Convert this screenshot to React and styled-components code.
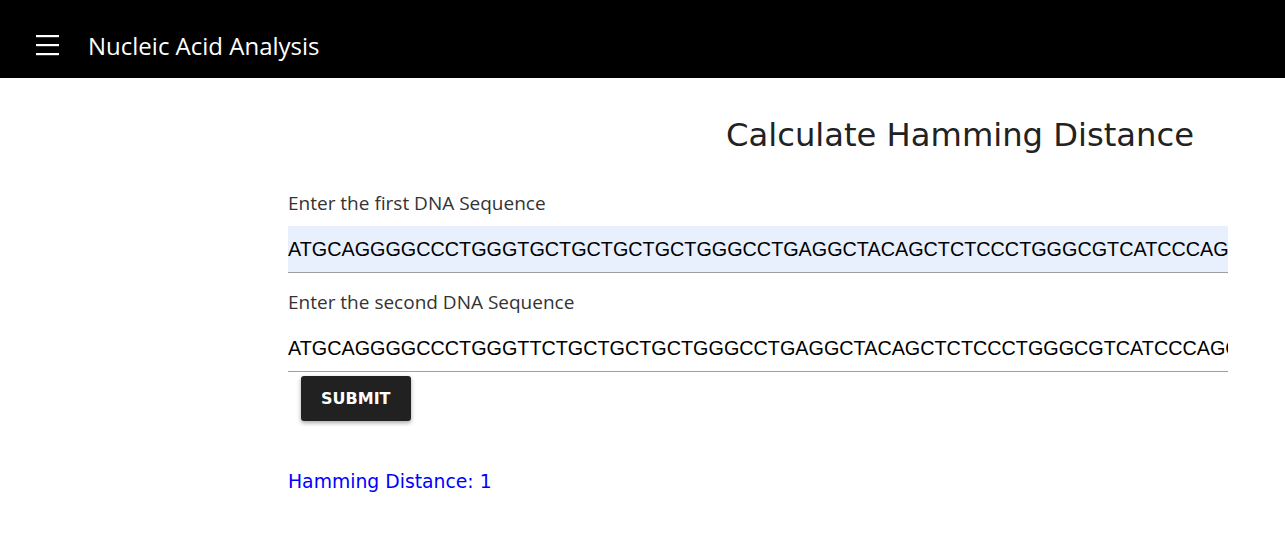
import React from "react";
import styled, { createGlobalStyle } from "styled-components";

const Global = createGlobalStyle`
  body {
    margin: 0;
    background: #fff;
    font-family: "Open Sans", "Noto Sans", sans-serif;
  }
`;

const Header = styled.header`
  height: 78px;
  background: #000;
  display: flex;
  align-items: center;
  padding-left: 36px;
  padding-top: 12px;
  box-sizing: border-box;
`;

const MenuButton = styled.button`
  background: none;
  border: none;
  padding: 0;
  margin-right: 29px;
  display: flex;
  cursor: pointer;
`;

const AppTitle = styled.h1`
  margin: 0;
  color: #fff;
  font-family: "Open Sans", sans-serif;
  font-size: 24px;
  font-weight: 400;
`;

const Main = styled.main`
  width: 940px;
  margin-left: 288px;
`;

const PageTitle = styled.h2`
  margin: 38px 34px 36px 0;
  text-align: right;
  font-family: "DejaVu Sans", Verdana, sans-serif;
  font-size: 32.2px;
  font-weight: 400;
  color: #222;
`;

const Field = styled.div`
  display: flex;
  flex-direction: column;
`;

const Label = styled.label`
  font-family: "Open Sans", sans-serif;
  font-size: 19px;
  color: #333;
  line-height: 26px;
  margin-bottom: 10px;
`;

const SeqInput = styled.input`
  height: 47px;
  box-sizing: border-box;
  border: none;
  border-bottom: 1px solid #9e9e9e;
  background: ${(p) => (p.$filled ? "#e8f0fe" : "transparent")};
  font-family: "Liberation Sans", Arial, sans-serif;
  font-size: 19.8px;
  color: #000;
  padding: 0;
  outline: none;
  margin-bottom: 16px;
`;

const SubmitButton = styled.button`
  align-self: flex-start;
  margin: -12px 0 0 13px;
  height: 45px;
  padding: 0 20px;
  background: #212121;
  color: #fff;
  border: none;
  border-radius: 3px;
  font-family: "DejaVu Sans", Verdana, sans-serif;
  font-weight: 700;
  font-size: 16px;
  box-shadow: 0 2px 4px rgba(0, 0, 0, 0.35);
  cursor: pointer;
`;

const Result = styled.p`
  margin: 50px 0 0;
  color: #0000ff;
  font-family: "DejaVu Sans", Verdana, sans-serif;
  font-size: 18.8px;
`;

const first =
  "ATGCAGGGGCCCTGGGTGCTGCTGCTGCTGGGCCTGAGGCTACAGCTCTCCCTGGGCGTCATCCCAGCTGAGGAGGAGAACCCGGCCTTCCTGAGCCGCTCCCA";
const second =
  "ATGCAGGGGCCCTGGGTTCTGCTGCTGCTGGGCCTGAGGCTACAGCTCTCCCTGGGCGTCATCCCAGCTGAGGAGGAGAACCCGGCCTTCCTGAGCCGCTCCCA";

const Burger = () => (
  <svg width="23" height="22" viewBox="0 0 23 22">
    <rect x="0" y="1" width="23" height="2.2" fill="#fff" />
    <rect x="0" y="10" width="23" height="2.2" fill="#fff" />
    <rect x="0" y="19" width="23" height="2.2" fill="#fff" />
  </svg>
);

const App = () => {
  return (
    <>
      <Global />
      <Header>
        <MenuButton aria-label="menu">
          <Burger />
        </MenuButton>
        <AppTitle>Nucleic Acid Analysis</AppTitle>
      </Header>
      <Main>
        <PageTitle>Calculate Hamming Distance</PageTitle>
        <Field>
          <Label>Enter the first DNA Sequence</Label>
          <SeqInput $filled defaultValue={first} />
        </Field>
        <Field>
          <Label>Enter the second DNA Sequence</Label>
          <SeqInput defaultValue={second} />
          <SubmitButton>SUBMIT</SubmitButton>
        </Field>
        <Result>Hamming Distance: 1</Result>
      </Main>
    </>
  );
};

export default App;
